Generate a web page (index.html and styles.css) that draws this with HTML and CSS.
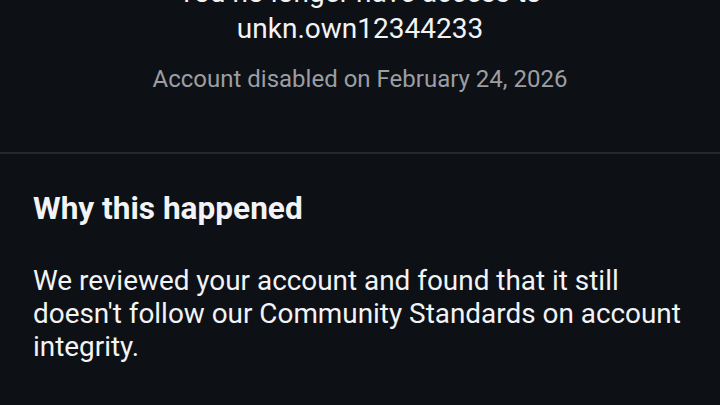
FILE: index.html
```html
<!DOCTYPE html>
<html lang="en">
<head>
    <meta charset="UTF-8">
    <meta name="viewport" content="width=device-width, initial-scale=1.0">
    <title>Account disabled</title>
    <link rel="stylesheet" href="styles.css">
</head>
<body>
    <div class="page">
        <div class="status">
            <h1 class="status-title">You no longer have access to unkn.own12344233</h1>
            <p class="status-date">Account disabled on February 24, 2026</p>
        </div>

        <div class="reason">
            <h2>Why this happened</h2>
            <p>We reviewed your account and found that it still doesn't follow our Community Standards on account integrity.</p>
        </div>
    </div>
</body>
</html>
```

FILE: styles.css
```css
html, body {
    margin: 0;
    padding: 0;
    background-color: #0d1015;
}

.page {
    font-family: Roboto, "Noto Sans", sans-serif;
    color: #f2f3f5;
    height: 405px;
    overflow: hidden;
}

.status {
    margin-top: -25px;
    padding: 0 100px 58px;
    text-align: center;
    border-bottom: 2px solid #25282d;
}

.status-title {
    margin: 0;
    font-size: 28px;
    font-weight: 400;
    line-height: 36px;
}

.status-date {
    margin: 17px 0 0;
    font-size: 24px;
    line-height: 30px;
    color: #9b9ea3;
}

.reason {
    padding: 36px 33px;
}

.reason h2 {
    margin: 0;
    font-size: 31.6px;
    font-weight: 700;
    line-height: 38px;
}

.reason p {
    margin: 36px 0 0;
    font-size: 27.9px;
    line-height: 33px;
}
```
